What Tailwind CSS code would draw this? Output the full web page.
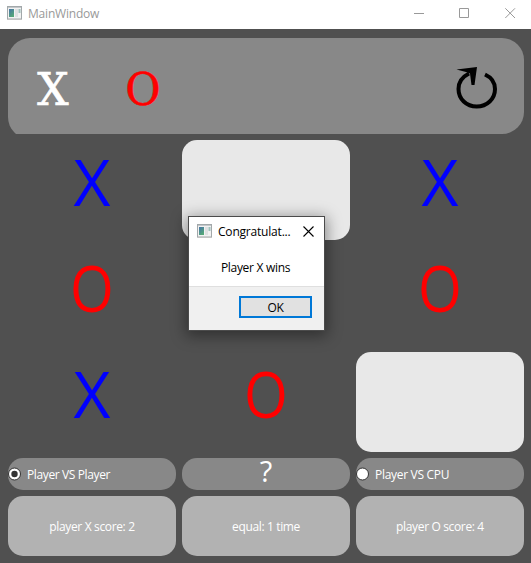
<!DOCTYPE html>
<html lang="en">
<head>
<meta charset="utf-8">
<title>MainWindow</title>
<script src="https://cdn.jsdelivr.net/npm/@tailwindcss/browser@4"></script>
</head>
<body class="relative flex h-[563px] w-[531px] flex-col overflow-hidden bg-[#505050] font-['Open_Sans','Noto_Sans',sans-serif] text-[12px]">
<svg class="absolute h-0 w-0">
  <defs>
    <linearGradient id="g" x1="0" y1="0" x2="0.6" y2="1"><stop offset="0" stop-color="#4673a8"/><stop offset="1" stop-color="#55a878"/></linearGradient>
    <symbol id="app" viewBox="0 0 15 14">
      <rect x=".5" y=".5" width="14" height="12.500" fill="#f2f2f2" stroke="#a2a8aa"/>
      <path d="M1 1.500h13" stroke="#c3c7ca"/>
      <rect x="2" y="3" width="5" height="8" fill="url(#g)"/>
      <rect x="8" y="3" width="3" height="8" fill="#dfe1e2"/>
      <rect x="11.500" y="3" width="2" height="4" fill="#9fc2bd"/>
      <path d="M0 13.500h15" stroke="#c4c4c4"/>
    </symbol>
  </defs>
</svg>

<header class="flex h-[29px] shrink-0 items-start bg-white pl-[7px] text-[#999]">
  <svg class="mt-[6px] h-[14px] w-[15px]"><use href="#app"/></svg>
  <span class="ml-[6px] mt-[5px] leading-[18px] tracking-[-0.2px]">MainWindow</span>
  <svg class="ml-auto mr-[15px] mt-[8px] h-[11px] w-[102px]" viewBox="0 0 102 11" fill="none" stroke="#999">
    <path d="M0 5.500h10M45.500.5h9v9h-9zM91.300.3l9.700 9.700M101 .3l-9.700 9.700"/>
  </svg>
</header>

<main class="flex flex-col gap-[6px] px-[8px] pt-[9px] pr-[7px] text-white">
  <section class="relative h-[96px] w-[516px] overflow-hidden">
    <div class="flex h-full">
      <div class="h-[101px] w-1/2 rounded-l-[22px] bg-[#888]"></div>
      <div class="h-[96px] w-1/2 rounded-r-[22px] bg-[#888]"></div>
    </div>
    <div class="absolute inset-0 flex items-center pt-[4px] font-['DejaVu_Serif',serif] text-[44px] leading-[60px]">
      <span class="mt-[4px] ml-[29px] flex w-[32px] justify-center [-webkit-text-stroke:0.7px_white]"><span>X</span></span>
      <span class="mt-[4px] ml-[58px] flex w-[32px] justify-center text-[#f00] [-webkit-text-stroke:0.5px_red]"><span class="scale-x-[.98]">O</span></span>
      <svg class="ml-auto mr-[26px] h-[42px] w-[42px]" viewBox="0 0 42 42">
        <path d="M29 7.500C35.500 10.500 39 16 39 22c0 10-8 17.500-18.300 17.500S2.500 32 2.500 22C2.500 15.500 6 10 13 6.500" fill="none" stroke="#000" stroke-width="4"/>
        <path d="M.5 2.500 21 0 18.500 18h-3L14 6.500l-4-1.500z" fill="#000"/>
      </svg>
    </div>
  </section>

  <section class="grid grid-cols-[168px_168px_168px] grid-rows-[100px_100px_100px] gap-[6px] text-[64px] leading-[90px]">
    <div class="flex items-start justify-center text-[#00f]"><span class="-mt-[3px]">X</span></div>
    <div class="rounded-[15px] bg-[#e8e8e8]"></div>
    <div class="flex items-start justify-center text-[#00f]"><span class="-mt-[3px]">X</span></div>
    <div class="flex items-start justify-center text-[#f00]"><span class="-mt-[3px] scale-x-[.88]">O</span></div>
    <div></div>
    <div class="flex items-start justify-center text-[#f00]"><span class="-mt-[3px] scale-x-[.88]">O</span></div>
    <div class="flex items-start justify-center text-[#00f]"><span class="-mt-[3px]">X</span></div>
    <div class="flex items-start justify-center text-[#f00]"><span class="-mt-[3px] scale-x-[.88]">O</span></div>
    <div class="rounded-[15px] bg-[#e8e8e8]"></div>
  </section>

  <section class="grid grid-cols-[168px_168px_168px] grid-rows-[32px_60px] gap-[6px]">
    <div class="flex items-center rounded-[15px] bg-[#888]">
      <svg class="h-[14px] w-[14px]" viewBox="0 0 14 14"><circle cx="6.500" cy="7" r="6" fill="#fff" stroke="#333"/><circle cx="6.500" cy="7" r="3.200" fill="#333"/></svg>
      <span class="ml-[5px] mt-[1px] tracking-[-0.38px]">Player VS Player</span>
    </div>
    <div class="flex items-start justify-center rounded-[15px] bg-[#888] text-[29px] leading-[26px]">?</div>
    <div class="flex items-center rounded-[15px] bg-[#888]">
      <svg class="h-[14px] w-[14px]" viewBox="0 0 14 14"><circle cx="6.500" cy="7" r="6" fill="#fff" stroke="#333"/></svg>
      <span class="ml-[5px] mt-[1px] tracking-[-0.3px]">Player VS CPU</span>
    </div>
    <div class="flex items-center justify-center rounded-[15px] bg-[#b2b2b2] pt-[2px] tracking-[-0.35px]">player X score: 2</div>
    <div class="flex items-center justify-center rounded-[15px] bg-[#b2b2b2] pt-[2px] tracking-[-0.35px]">equal: 1 time</div>
    <div class="flex items-center justify-center rounded-[15px] bg-[#b2b2b2] pt-[2px] tracking-[-0.35px]">player O score: 4</div>
  </section>
</main>

<div class="absolute left-[188px] top-[216px] flex h-[115px] w-[137px] flex-col border border-[#4b4b4b] bg-white text-black shadow-[0_3px_14px_2px_rgba(0,0,0,0.4)]">
  <div class="flex h-[30px] items-start pl-[8px]">
    <svg class="mt-[7px] h-[14px] w-[15px]"><use href="#app"/></svg>
    <span class="ml-[6px] mt-[6px] leading-[18px] tracking-[-0.2px]">Congratulat...</span>
    <svg class="ml-auto mr-[10px] mt-[9px] h-[11px] w-[11px]" viewBox="0 0 11 11" stroke="#000" stroke-width="1.100"><path d="M.5.5l10 10M10.500.5l-10 10"/></svg>
  </div>
  <div class="flex h-[39px] items-center justify-center pt-[2px] pr-[2px] tracking-[-0.3px]">Player X wins</div>
  <div class="flex flex-1 items-start justify-end border-t border-[#dfdfdf] bg-[#f0f0f0] pr-[12px] pt-[9px]">
    <div class="flex h-[22px] w-[73px] items-center justify-center border-2 border-[#0078d7] bg-[#e1e1e1] pt-[1px] tracking-[-0.3px]">OK</div>
  </div>
</div>
</body>
</html>
